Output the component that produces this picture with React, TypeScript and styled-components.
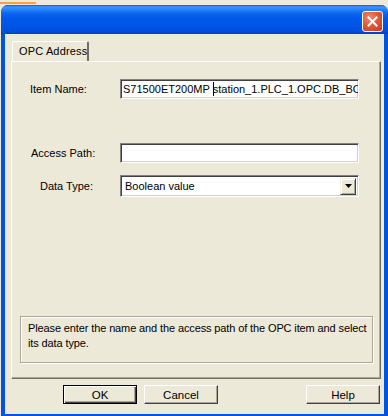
import React from "react";
import styled, { createGlobalStyle } from "styled-components";

const Global = createGlobalStyle`
  html, body { margin: 0; padding: 0; background: #ece9d8; }
  body { font-family: "Liberation Sans", Arial, sans-serif; font-size: 11px; color: #000; }
`;

const Screen = styled.div`
  width: 388px;
  height: 416px;
  overflow: hidden;
  display: flex;
  flex-direction: column;
  background: #ece9d8;
`;

const BackStrip = styled.div`
  height: 5px;
  display: flex;
  align-items: flex-start;
`;

const BackAccent = styled.div`
  margin-top: 2px;
  width: 36px;
  height: 2px;
  background: #f7a33a;
`;

const Window = styled.div`
  margin-left: 1px;
  width: 387px;
  height: 411px;
  display: flex;
  flex-direction: column;
  background: #0054e3;
  border-radius: 7px 7px 0 0;
  overflow: hidden;
`;

const TitleBar = styled.div`
  height: 29px;
  flex: none;
  display: flex;
  justify-content: flex-end;
  align-items: flex-start;
  padding-right: 5px;
  background: linear-gradient(
    to bottom,
    #0a5de8 0%,
    #3d95ff 7%,
    #2a86fb 14%,
    #0a64ee 30%,
    #0058ea 50%,
    #0055e6 75%,
    #0050dc 90%,
    #003fc4 100%
  );
`;

const CloseButton = styled.div`
  margin-top: 6px;
  width: 19px;
  height: 19px;
  border: 1px solid #fff;
  border-radius: 3px;
  background: radial-gradient(circle at 35% 30%, #f08a70 0%, #e2583a 45%, #c8381b 100%);
  display: flex;
  align-items: center;
  justify-content: center;
`;

const Client = styled.div`
  flex: 1;
  margin: 0 4px 2px 4px;
  background: #ece9d8;
  display: flex;
  flex-direction: column;
  padding: 7px 0 0 6px;
`;

const TabStrip = styled.div`
  display: flex;
  height: 20px;
  padding-left: 1px;
`;

const Tab = styled.div`
  width: 77px;
  height: 20px;
  box-sizing: border-box;
  border-top: 1px solid #fff;
  border-left: 1px solid #fff;
  border-right: 2px solid #716f64;
  border-radius: 2px 2px 0 0;
  padding: 3px 0 0 6px;
  font-size: 11px;
  letter-spacing: 0.15px;
  white-space: nowrap;
  position: relative;
  z-index: 1;
  background: #ece9d8;
  margin-bottom: -1px;
`;

const Panel = styled.div`
  width: 370px;
  height: 318px;
  box-sizing: border-box;
  border-top: 1px solid #fff;
  border-left: 1px solid #fff;
  border-right: 1px solid #716f64;
  border-bottom: 1px solid #716f64;
  box-shadow: inset -1px -1px 0 #aca899;
  display: flex;
  flex-direction: column;
  padding: 17px 0 0 0;
`;

const FieldRow = styled.div<{ $gap: number }>`
  display: flex;
  align-items: center;
  margin-top: ${(p) => p.$gap}px;
`;

const Label = styled.div<{ $indent: number }>`
  width: ${(p) => 108 - p.$indent}px;
  padding-left: ${(p) => p.$indent}px;
  font-size: 11px;
  white-space: nowrap;
`;

const TextBox = styled.div`
  width: 239px;
  height: 20px;
  box-sizing: border-box;
  background: #fff;
  border-top: 1px solid #808080;
  border-left: 1px solid #808080;
  border-right: 1px solid #fff;
  border-bottom: 1px solid #fff;
  box-shadow: inset 1px 1px 0 #404040, inset -1px -1px 0 #d4d0c8;
  padding: 0 0 0 2px;
  display: flex;
  align-items: center;
  overflow: hidden;
  white-space: pre;
  font-size: 11px;
`;

const Segment = styled.span`
  flex: none;
`;

const Caret = styled.span`
  flex: none;
  width: 1px;
  height: 14px;
  background: #000;
  margin-right: -1px;
`;

const Select = styled.div`
  width: 239px;
  height: 22px;
  box-sizing: border-box;
  background: #fff;
  border-top: 1px solid #808080;
  border-left: 1px solid #808080;
  border-right: 1px solid #fff;
  border-bottom: 1px solid #fff;
  box-shadow: inset 1px 1px 0 #404040, inset -1px -1px 0 #d4d0c8;
  padding: 2px 2px 2px 4px;
  display: flex;
  align-items: center;
  font-size: 11px;
`;

const SelectText = styled.div`
  flex: 1;
`;

const DropButton = styled.div`
  width: 16px;
  height: 17px;
  box-sizing: border-box;
  background: #ece9d8;
  border-top: 1px solid #f1efe2;
  border-left: 1px solid #f1efe2;
  border-right: 1px solid #404040;
  border-bottom: 1px solid #404040;
  box-shadow: inset 1px 1px 0 #fff, inset -1px -1px 0 #aca899;
  display: flex;
  align-items: center;
  justify-content: center;
`;

const Spacer = styled.div`
  flex: 1;
`;

const InfoBox = styled.div`
  margin: 0 0 15px 8px;
  width: 353px;
  height: 47px;
  box-sizing: border-box;
  border: 1px solid #aca899;
  box-shadow: inset 1px 1px 0 #fff, 1px 1px 0 #fff;
  padding: 4px 2px 0 7px;
  font-size: 11px;
  line-height: 15px;
  letter-spacing: -0.12px;
`;

const ButtonBar = styled.div`
  display: flex;
  padding: 6px 0 0 52px;
  gap: 7px;
`;

const Button = styled.div<{ $default?: boolean; $push?: boolean }>`
  width: 74px;
  height: 19px;
  box-sizing: border-box;
  margin-left: ${(p) => (p.$push ? "81px" : "0")};
  border-style: solid;
  border-width: 1px;
  border-color: ${(p) => (p.$default ? "#000" : "#fff #404040 #404040 #fff")};
  box-shadow: ${(p) =>
    p.$default
      ? "inset 1px 1px 0 #fff, inset -1px -1px 0 #404040, inset -2px -2px 0 #aca899"
      : "inset -1px -1px 0 #aca899"};
  background: #ece9d8;
  display: flex;
  align-items: center;
  justify-content: center;
  font-size: 11.5px;
`;

export default function App() {
  return (
    <>
      <Global />
      <Screen>
        <BackStrip>
          <BackAccent />
        </BackStrip>
        <Window>
          <TitleBar>
            <CloseButton>
              <svg width="11" height="11" viewBox="0 0 11 11">
                <path d="M1.5 1.5 L9.5 9.5 M9.5 1.5 L1.5 9.5" stroke="#fff" strokeWidth="2" strokeLinecap="square" />
              </svg>
            </CloseButton>
          </TitleBar>
          <Client>
            <TabStrip>
              <Tab>OPC Address</Tab>
            </TabStrip>
            <Panel>
              <FieldRow $gap={0}>
                <Label $indent={18}>Item Name:</Label>
                <TextBox>
                  <Segment>S71500ET200MP </Segment>
                  <Caret />
                  <Segment>station_1.PLC_1.OPC.DB_BOOL</Segment>
                </TextBox>
              </FieldRow>
              <FieldRow $gap={44}>
                <Label $indent={19}>Access Path:</Label>
                <TextBox />
              </FieldRow>
              <FieldRow $gap={12}>
                <Label $indent={28}>Data Type:</Label>
                <Select>
                  <SelectText>Boolean value</SelectText>
                  <DropButton>
                    <svg width="7" height="4" viewBox="0 0 7 4">
                      <path d="M0 0 H7 L3.5 4 Z" fill="#000" />
                    </svg>
                  </DropButton>
                </Select>
              </FieldRow>
              <Spacer />
              <InfoBox>
                Please enter the name and the access path of the OPC item and select its data type.
              </InfoBox>
            </Panel>
            <ButtonBar>
              <Button $default>OK</Button>
              <Button>Cancel</Button>
              <Button $push>Help</Button>
            </ButtonBar>
          </Client>
        </Window>
      </Screen>
    </>
  );
}
